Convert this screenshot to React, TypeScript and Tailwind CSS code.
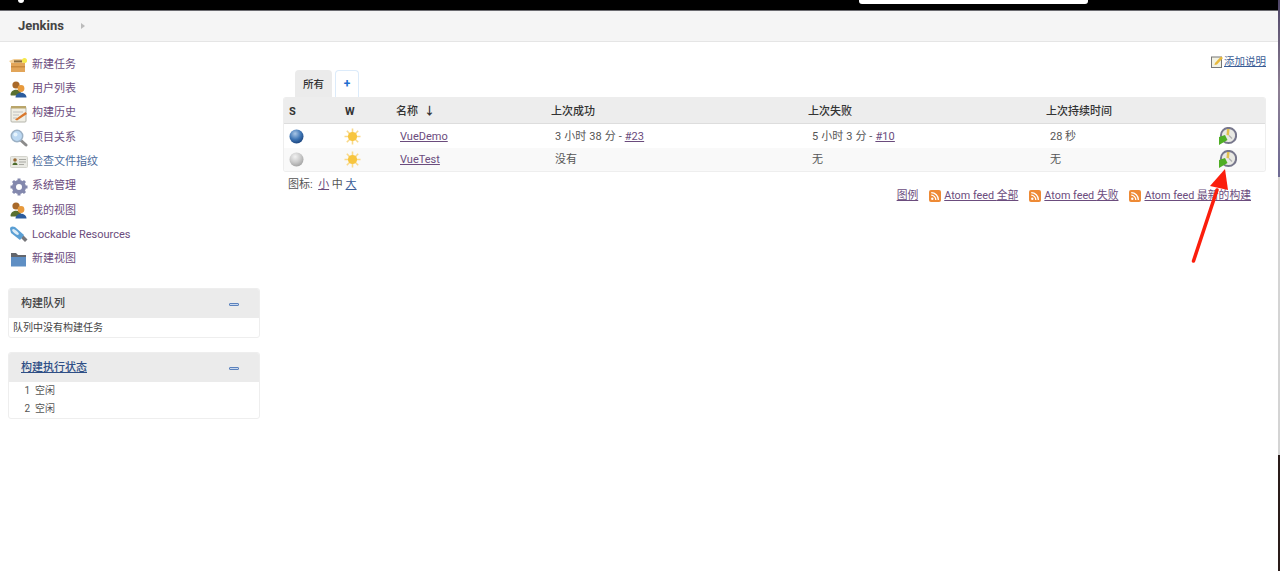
import { Fragment } from 'react'

const FONT = '[font-family:Roboto,"Noto_Sans_CJK_SC",sans-serif]'
const LINK = 'text-[#6b4c7d] underline'

const Box = () => (
  <svg width="19" height="15" viewBox="0 0 19 15">
    <path d="M2 5 H16 V14 H2 Z" fill="#e2a559" />
    <path d="M2 5 L0 3 L5 1 H12 L18 3 L16 5 Z" fill="#f3cf96" />
    <rect x="5" y="2.4" width="8" height="2" fill="#8a6a3c" />
    <rect x="2" y="8" width="14" height="1.5" fill="#c98a3f" />
    <circle cx="15.5" cy="2.5" r="2.5" fill="#f5e94a" />
  </svg>
)

const Users = () => (
  <svg width="17" height="17" viewBox="0 0 17 17">
    <circle cx="6" cy="4" r="3.6" fill="#a8692a" />
    <path d="M0.5 14 C0.5 7.5 10 7 11 12 L9 14.5 H1 Z" fill="#5a7030" />
    <circle cx="11" cy="7.5" r="3.4" fill="#e89a3c" />
    <path d="M5.5 16.5 C5.5 10 16.5 10 16.5 16.5 Z" fill="#2b5c9e" />
  </svg>
)

const Notepad = () => (
  <svg width="18" height="18" viewBox="0 0 18 18">
    <rect x="1" y="2" width="15" height="15" rx="1" fill="#f0efe6" stroke="#b5b5ac" />
    <rect x="1" y="1" width="15" height="2.5" fill="#b9a56a" />
    <path d="M3 7 H13 M3 10 H9 M3 13 H7" stroke="#c0c0c0" />
    <path d="M5 14.5 L15.5 7 L17 9 L7 15.5 Z" fill="#d9772c" />
  </svg>
)

const Magnifier = () => (
  <svg width="18" height="18" viewBox="0 0 18 18">
    <path d="M10.5 11 L16 16" stroke="#8b8b8b" strokeWidth="3" strokeLinecap="round" />
    <circle cx="7" cy="7" r="5.7" fill="#bcd8f2" stroke="#9bb0c4" strokeWidth="1.5" />
    <circle cx="5.5" cy="5.5" r="2" fill="#e6f3fc" />
  </svg>
)

const Card = () => (
  <svg width="18" height="14" viewBox="0 0 18 14">
    <rect x="0.5" y="1.5" width="17" height="11" rx="1" fill="#e9e9e3" stroke="#d4d4cd" />
    <circle cx="5" cy="5" r="1.8" fill="#9a6a35" />
    <path d="M2.5 10 C2.5 6.5 7.5 6.5 7.5 10 Z" fill="#4d6b2c" />
    <path d="M9 4.5 H16 M9 7 H16 M9 9.5 H14" stroke="#a9a9a3" />
  </svg>
)

const Gear = () => (
  <svg width="18" height="18" viewBox="0 0 18 18">
    <circle cx="9" cy="9" r="5" fill="none" stroke="#8388ad" strokeWidth="4" />
    <path
      d="M9 0.5 V4 M9 14 V17.5 M0.5 9 H4 M14 9 H17.5 M3 3 L5.5 5.5 M12.5 12.5 L15 15 M15 3 L12.5 5.5 M5.5 12.5 L3 15"
      stroke="#8388ad"
      strokeWidth="3"
    />
  </svg>
)

const Usb = () => (
  <svg width="19" height="18" viewBox="0 0 19 18">
    <path d="M12 12 L16 16 L18.5 13.5 L14 9 Z" fill="#77777b" />
    <path d="M1 3 C1 0 4 0 6 1 L15 9 L11 14 L2 7 Z" fill="#5a9fd4" />
    <ellipse cx="6.5" cy="6" rx="4" ry="1.6" transform="rotate(38 6.5 6)" fill="#dcecf7" />
  </svg>
)

const Folder = () => (
  <svg width="17" height="16" viewBox="0 0 17 16">
    <path d="M1 1 H6 L8 3 H16 V14 H1 Z" fill="#63666c" />
    <rect x="1" y="5" width="15" height="9.5" fill="#5f8fc4" />
  </svg>
)

const Rss = () => (
  <svg width="12" height="12" viewBox="0 0 12 12" className="shrink-0">
    <rect width="12" height="12" rx="2" fill="#ee8a35" />
    <circle cx="3.3" cy="8.8" r="1.2" fill="#fff" />
    <path d="M2.2 5.2 A4.6 4.6 0 0 1 6.8 9.9 M2.2 2.6 A7.2 7.2 0 0 1 9.4 9.9" fill="none" stroke="#fff" strokeWidth="1.3" />
  </svg>
)

const Ball = ({ grey }: { grey?: boolean }) => {
  const id = grey ? 'ball-grey' : 'ball-blue'
  return (
    <svg width="15" height="15" viewBox="0 0 15 15">
      <defs>
        <radialGradient id={id} cx="40%" cy="30%" r="75%">
          <stop offset="0%" stopColor={grey ? '#f2f2f2' : '#a9c6e6'} />
          <stop offset="55%" stopColor={grey ? '#c9c9c9' : '#3f76b5'} />
          <stop offset="100%" stopColor={grey ? '#9f9f9f' : '#173f78'} />
        </radialGradient>
      </defs>
      <circle cx="7.5" cy="7.5" r="7" fill={`url(#${id})`} />
    </svg>
  )
}

const Sun = () => (
  <svg width="17" height="17" viewBox="0 0 17 17">
    <path
      d="M8.5 0.5 V16.5 M0.5 8.5 H16.5 M2.8 2.8 L14.2 14.2 M14.2 2.8 L2.8 14.2"
      stroke="#f9d98a"
      strokeWidth="1.6"
    />
    <circle cx="8.5" cy="8.5" r="4.6" fill="#f7c53e" />
  </svg>
)

const Clock = () => (
  <svg width="19" height="19" viewBox="0 0 19 19">
    <circle cx="10.5" cy="8.5" r="7.6" fill="#e9e9e4" stroke="#77778c" strokeWidth="2" />
    <path d="M9 2 L11.5 2 L11 8.5 L8.5 8 Z" fill="#e2c04e" />
    <path d="M11 8.5 L14 11.5" stroke="#b0b0b0" strokeWidth="1.2" />
    <path d="M1 18 L1 10 L7 8 L9.5 13 Z" fill="#4fae24" />
  </svg>
)

const Minus = () => <span className="mr-[20px] h-[3px] w-[10px] rounded-[1px] border border-[#5b82bd] bg-[#c9d8ee]" />

const navItems = [
  { label: '新建任务', icon: <Box /> },
  { label: '用户列表', icon: <Users /> },
  { label: '构建历史', icon: <Notepad /> },
  { label: '项目关系', icon: <Magnifier /> },
  { label: '检查文件指纹', icon: <Card />, blue: true },
  { label: '系统管理', icon: <Gear /> },
  { label: '我的视图', icon: <Users /> },
  { label: 'Lockable Resources', icon: <Usb /> },
  { label: '新建视图', icon: <Folder /> },
]

const headers = [
  { label: 'S', w: 'w-[56px]', bold: true },
  { label: 'W', w: 'w-[51px]', bold: true },
  { label: '名称', w: 'w-[155px]', arrow: true },
  { label: '上次成功', w: 'w-[257px]' },
  { label: '上次失败', w: 'w-[238px]' },
  { label: '上次持续时间', w: 'w-[170px]' },
]

const feeds = ['全部', '失败', '最新的构建']

export default function App() {
  return (
    <div className={`relative h-[571px] w-[1280px] overflow-hidden bg-white text-[11px] text-[#333] ${FONT}`}>
      {/* Top bar */}
      <div className="flex h-[11px] items-start border-b border-[#6b6b70] bg-black">
        <div className="ml-[18px] h-[3px] w-[6px] rounded-b-full bg-white" />
        <div className="ml-[835px] h-[4px] w-[229px] rounded-b-[3px] bg-white" />
      </div>

      {/* Breadcrumb */}
      <div className="flex h-[31px] items-center border-b border-[#e5e5e5] bg-[#f5f5f5] pl-[18px]">
        <span className="text-[13px] font-bold text-[#444]">Jenkins</span>
        <span className="ml-[17px] h-0 w-0 border-y-[3px] border-l-[4px] border-y-transparent border-l-[#bbb]" />
      </div>

      <div className="flex">
        {/* Sidebar */}
        <aside className="w-[283px] shrink-0 pl-[8px] pt-[11px]">
          <nav className="flex flex-col">
            {navItems.map((item) => (
              <div key={item.label} className="flex h-[24.3px] items-center">
                <span className="flex w-[24px] items-center justify-center pr-[3px]">{item.icon}</span>
                <span className={item.blue ? 'text-[#4a6a9c]' : 'text-[#6b4c7d]'}>{item.label}</span>
              </div>
            ))}
          </nav>

          <section className="mt-[16px] w-[252px] overflow-hidden rounded-[3px] border border-[#eee]">
            <div className="flex h-[29px] items-center justify-between bg-[#ebebeb] pl-[12px] pt-[2px]">
              <span className="font-medium text-[#444]">构建队列</span>
              <Minus />
            </div>
            <div className="flex h-[19px] items-center pl-[4px] text-[10px] text-[#444]">队列中没有构建任务</div>
          </section>

          <section className="mt-[14px] w-[252px] overflow-hidden rounded-[3px] border border-[#eee]">
            <div className="flex h-[29px] items-center justify-between bg-[#ebebeb] pl-[12px] pt-[2px]">
              <span className="font-medium text-[#2f4f86] underline">构建执行状态</span>
              <Minus />
            </div>
            <div className="flex flex-col text-[10px] text-[#555]">
              {[1, 2].map((n) => (
                <div key={n} className="flex h-[18px] items-center">
                  <span className="w-[21px] text-right">{n}</span>
                  <span className="ml-[5px]">空闲</span>
                </div>
              ))}
            </div>
          </section>
        </aside>

        {/* Main */}
        <main className="w-[983px]">
          <div className="flex h-[28px] items-start justify-end">
            <div className="mt-[12px] flex items-center text-[10.5px]">
              <span className="mr-[1px] flex">
                <svg width="12" height="13" viewBox="0 0 12 13">
                  <rect x="0.5" y="2" width="10" height="10.5" fill="#f2f2e4" stroke="#777" />
                  <path d="M4 8 L10 1.5 L12 3 L6 9.5 L3.5 10 Z" fill="#e8b93c" />
                </svg>
              </span>
              <span className="text-[#3a5d96] underline">添加说明</span>
            </div>
          </div>

          {/* Tabs */}
          <div className="flex h-[27px] pl-[12px]">
            <div className="flex w-[37px] items-center justify-center rounded-t-[4px] bg-[#ebebeb] pt-[2px] text-[10.5px] font-medium text-[#333]">
              所有
            </div>
            <div className="ml-[3px] flex w-[24px] items-center justify-center rounded-t-[4px] border border-b-0 border-[#dcebfa] text-[12px] font-bold leading-none text-[#1f6fd0]">
              +
            </div>
          </div>

          {/* Job table */}
          <div className="overflow-hidden rounded-[3px] border border-t-0 border-[#eee]">
            <div className="flex h-[27px] items-center border-b border-[#ddd] bg-[#ededed] pl-[5px] pt-[4px] font-medium text-[#333]">
              {headers.map((h) => (
                <div key={h.label} className={`${h.w} ${h.bold ? 'font-bold' : ''} flex items-center`}>
                  {h.label}
                  {h.arrow && <span className="ml-[6px] text-[11px] font-bold">↓</span>}
                </div>
              ))}
            </div>
            <div className="flex h-[24px] items-center pl-[5px] text-[#555]">
              <div className="w-[55px]"><Ball /></div>
              <div className="w-[56px]"><Sun /></div>
              <div className="w-[155px] pt-[2px]"><span className={LINK}>VueDemo</span></div>
              <div className="w-[257px] pt-[2px] tracking-[0.12px]">3 小时 38 分 - <span className={LINK}>#23</span></div>
              <div className="w-[238px] pt-[2px] tracking-[0.12px]">5 小时 3 分 - <span className={LINK}>#10</span></div>
              <div className="w-[168px] pt-[2px]">28 秒</div>
              <Clock />
            </div>
            <div className="flex h-[23px] items-center bg-[#f9f9f9] pl-[5px] text-[#555]">
              <div className="w-[55px]"><Ball grey /></div>
              <div className="w-[56px]"><Sun /></div>
              <div className="w-[155px] pt-[2px]"><span className={LINK}>VueTest</span></div>
              <div className="w-[257px] pt-[2px]">没有</div>
              <div className="w-[238px] pt-[2px]">无</div>
              <div className="w-[168px] pt-[2px]">无</div>
              <Clock />
            </div>
          </div>

          {/* Footer */}
          <div className="flex items-start justify-between pl-[5px] pr-[15px]">
            <div className="mt-[5px] text-[#555]">
              图标:&nbsp; <span className={LINK}>小</span> 中 <span className="text-[#3a5d96] underline">大</span>
            </div>
            <div className="mt-[16px] flex items-center text-[10.8px]">
              <span className={LINK}>图例</span>
              {feeds.map((f) => (
                <Fragment key={f}>
                  <span className="ml-[11px] mr-[3px] flex"><Rss /></span>
                  <span className={LINK}>Atom feed {f}</span>
                </Fragment>
              ))}
            </div>
          </div>
        </main>
      </div>

      {/* Red annotation arrow */}
      <svg width="50" height="100" viewBox="0 0 50 100" className="absolute left-[1180px] top-[168px]">
        <path d="M13.5 93 L37 22" stroke="#fb1e0c" strokeWidth="3.5" strokeLinecap="round" />
        <path d="M45 1 L30 18 L48 22 Z" fill="#fb1e0c" />
      </svg>

      {/* Window edge behind the screenshot */}
      <div className="absolute right-0 top-0 h-[177px] w-[2px] bg-gradient-to-b from-[#4f4668] via-[#8d7f93] to-[#6e6a94]" />
      <div className="absolute right-0 top-[177px] h-[278px] w-[2px] bg-[#d4d4d4]" />
      <div className="absolute right-0 top-[455px] h-[116px] w-[2px] bg-[#2a1c1a]" />
    </div>
  )
}
